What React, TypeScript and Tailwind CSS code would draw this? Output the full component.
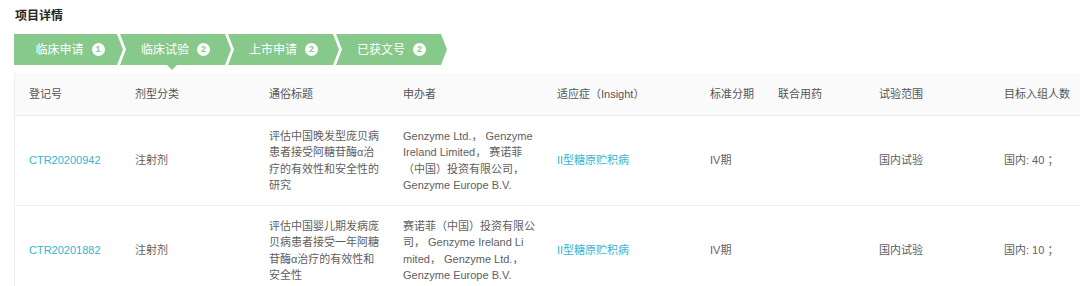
import React from 'react';

interface Step {
  label: string;
  count: number;
}

const steps: Step[] = [
  { label: '临床申请', count: 1 },
  { label: '临床试验', count: 2 },
  { label: '上市申请', count: 2 },
  { label: '已获文号', count: 2 },
];

interface Row {
  id: string;
  form: string;
  title: string[];
  sponsor: string[];
  indication: string;
  phase: string;
  combo: string;
  scope: string;
  target: string;
}

const rows: Row[] = [
  {
    id: 'CTR20200942',
    form: '注射剂',
    title: ['评估中国晚发型庞贝病', '患者接受阿糖苷酶α治', '疗的有效性和安全性的', '研究'],
    sponsor: ['Genzyme Ltd.， Genzyme', 'Ireland Limited， 赛诺菲', '（中国）投资有限公司，', 'Genzyme Europe B.V.'],
    indication: 'II型糖原贮积病',
    phase: 'IV期',
    combo: '',
    scope: '国内试验',
    target: '国内: 40 ；',
  },
  {
    id: 'CTR20201882',
    form: '注射剂',
    title: ['评估中国婴儿期发病庞', '贝病患者接受一年阿糖', '苷酶α治疗的有效性和', '安全性'],
    sponsor: ['赛诺菲（中国）投资有限公', '司， Genzyme Ireland Li', 'mited， Genzyme Ltd.，', 'Genzyme Europe B.V.'],
    indication: 'II型糖原贮积病',
    phase: 'IV期',
    combo: '',
    scope: '国内试验',
    target: '国内: 10 ；',
  },
];

const headers = ['登记号', '剂型分类', '通俗标题', '申办者', '适应症（Insight）', '标准分期', '联合用药', '试验范围', '目标入组人数'];

const gridCols = 'grid grid-cols-[106px_134px_134px_154px_153px_68px_101px_125px_140px]';

// chevron shapes: first step has a flat left edge
const firstClip = '[clip-path:polygon(0_0,calc(100%_-_6px)_0,100%_50%,calc(100%_-_6px)_100%,0_100%)]';
const nextClip = '[clip-path:polygon(0_0,calc(100%_-_6px)_0,100%_50%,calc(100%_-_6px)_100%,0_100%,6px_50%)]';

const StepBar: React.FC = () => (
  <div className="relative flex h-[31px] pl-[14px]">
    {steps.map((s, i) => (
      <div
        key={s.label}
        className={`flex h-full items-center justify-center gap-[8px] bg-[#87c98b] text-[12px] text-white ${
          i === 0 ? `w-[109px] pl-[3px] ${firstClip}` : `-ml-[3px] w-[111px] ${nextClip}`
        }`}
      >
        <span>{s.label}</span>
        <span className="flex h-[13px] w-[13px] items-center justify-center rounded-full bg-white text-[9px] font-bold leading-none text-[#87c98b]">
          {s.count}
        </span>
      </div>
    ))}
    {/* current step indicator */}
    <div className="absolute left-[167px] top-[31px] h-0 w-0 border-x-[5px] border-t-[5px] border-x-transparent border-t-[#87c98b]" />
  </div>
);

const Lines: React.FC<{ lines: string[] }> = ({ lines }) => (
  <div className="flex flex-col">
    {lines.map((l, i) => (
      <span key={i} className="whitespace-nowrap">
        {l}
      </span>
    ))}
  </div>
);

export default function App() {
  return (
    <div
      className="h-[286px] w-[1080px] overflow-hidden bg-white"
      style={{ fontFamily: '"Liberation Sans", "Noto Sans CJK SC", sans-serif' }}
    >
      <div className="px-[15px] pt-[7px] pb-[9px] text-[12px] font-bold leading-[18px] text-[#262626]">项目详情</div>
      <StepBar />
      <div className="mt-[8px] ml-[14px] border-l border-[#efefef]">
        <div className={`${gridCols} h-[43px] items-center border-b border-[#ececec] bg-[#fafafa] text-[11px] text-[#555]`}>
          {headers.map((h) => (
            <div key={h} className="whitespace-nowrap px-[14px]">
              {h}
            </div>
          ))}
        </div>
        {rows.map((r) => (
          <div
            key={r.id}
            className={`${gridCols} h-[90px] items-center border-b border-[#efefef] text-[11px] leading-[16.5px] text-[#606060]`}
          >
            <div className="px-[14px] text-[#33b5d6]">{r.id}</div>
            <div className="px-[14px]">{r.form}</div>
            <div className="px-[14px]">
              <Lines lines={r.title} />
            </div>
            <div className="px-[14px]">
              <Lines lines={r.sponsor} />
            </div>
            <div className="px-[14px] text-[#33b5d6]">{r.indication}</div>
            <div className="px-[14px]">{r.phase}</div>
            <div className="px-[14px]">{r.combo}</div>
            <div className="px-[14px]">{r.scope}</div>
            <div className="whitespace-nowrap px-[14px]">{r.target}</div>
          </div>
        ))}
      </div>
    </div>
  );
}
